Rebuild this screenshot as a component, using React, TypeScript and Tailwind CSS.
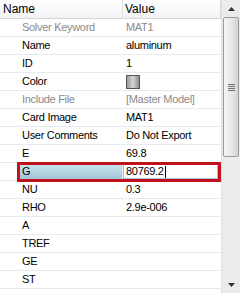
import React from "react";

type Row = { name: string; value?: string; gray?: boolean; swatch?: boolean };

const rows: Row[] = [
  { name: "Solver Keyword", value: "MAT1", gray: true },
  { name: "Name", value: "aluminum" },
  { name: "ID", value: "1" },
  { name: "Color", swatch: true },
  { name: "Include File", value: "[Master Model]", gray: true },
  { name: "Card Image", value: "MAT1" },
  { name: "User Comments", value: "Do Not Export" },
  { name: "E", value: "69.8" },
  { name: "G", value: "80769.2" },
  { name: "NU", value: "0.3" },
  { name: "RHO", value: "2.9e-006" },
  { name: "A" },
  { name: "TREF" },
  { name: "GE" },
  { name: "ST" },
  { name: "" },
];

export default function App() {
  return (
    <div
      className="w-[240px] h-[293px] flex overflow-hidden bg-white text-[11px] text-black"
      style={{ fontFamily: '"Liberation Sans", Arial, sans-serif' }}
    >
      <div className="w-[221px] flex flex-col">
        <div className="h-[19px] shrink-0 flex bg-gradient-to-b from-white to-[#f1f2f4] border-b border-[#d5d5d5] text-[12px]">
          <div className="w-[123px] pl-[3px] flex items-center border-r border-[#e3e3e3]">Name</div>
          <div className="flex-1 pl-[2px] flex items-center border-r border-[#d9d9d9]">Value</div>
        </div>
        {rows.map((r, i) => {
          if (r.name === "G") {
            return (
              <div key={i} className="relative h-[18px] shrink-0 flex border-b border-[#e4ecf2] tracking-[-0.3px]">
                <div className="w-[17px]" />
                <div className="w-[106px] pl-[5px] flex items-center bg-gradient-to-b from-[#cde5ef] to-[#9fc3d6] border-r border-[#e6eef3]">
                  G
                </div>
                <div className="flex-1 flex items-stretch pr-[3px] py-[1px]">
                  <div className="flex-1 flex items-center pl-[2px] border border-[#9fbde3] bg-white">
                    80769.2<span className="w-px h-[12px] bg-black ml-px" />
                  </div>
                </div>
                <div className="absolute left-[17px] right-0 top-[-1px] bottom-[-2px] border-[3px] border-[#c0121c] pointer-events-none" />
              </div>
            );
          }
          return (
            <div key={i} className="h-[18px] shrink-0 flex border-b border-[#e4ecf2] tracking-[-0.3px]">
              <div className={`w-[123px] pl-[22px] flex items-center ${r.gray ? "text-[#8a8a8a]" : ""}`}>
                {r.name}
              </div>
              <div className={`flex-1 pl-[3px] flex items-center ${r.gray ? "text-[#8a8a8a]" : ""}`}>
                {r.swatch ? (
                  <div className="w-[14px] h-[14px] border border-[#555] bg-gradient-to-r from-[#9a9a9a] via-[#d6d6d6] to-[#8c8c8c]" />
                ) : (
                  r.value
                )}
              </div>
            </div>
          );
        })}
      </div>
      <div className="w-[19px] flex flex-col bg-[#ebebeb] border-l border-[#e0e0e0]">
        <div className="h-[17px] shrink-0 flex items-center justify-center">
          <svg width="7" height="4" viewBox="0 0 7 4">
            <polygon points="3.5,0 7,4 0,4" fill="#333" />
          </svg>
        </div>
        <div className="mx-[1px] h-[140px] shrink-0 rounded-[2px] border border-[#9b9b9b] bg-gradient-to-r from-[#f4f4f4] via-[#e8e8e8] to-[#d4d4d4] flex flex-col items-center justify-center gap-[1px]">
          <div className="w-[7px] h-px bg-[#6e6e6e]" />
          <div className="w-[7px] h-px bg-[#6e6e6e]" />
          <div className="w-[7px] h-px bg-[#6e6e6e]" />
          <div className="w-[7px] h-px bg-[#6e6e6e]" />
        </div>
        <div className="flex-1" />
        <div className="h-[17px] shrink-0 flex items-center justify-center">
          <svg width="7" height="4" viewBox="0 0 7 4">
            <polygon points="0,0 7,0 3.5,4" fill="#333" />
          </svg>
        </div>
      </div>
    </div>
  );
}
